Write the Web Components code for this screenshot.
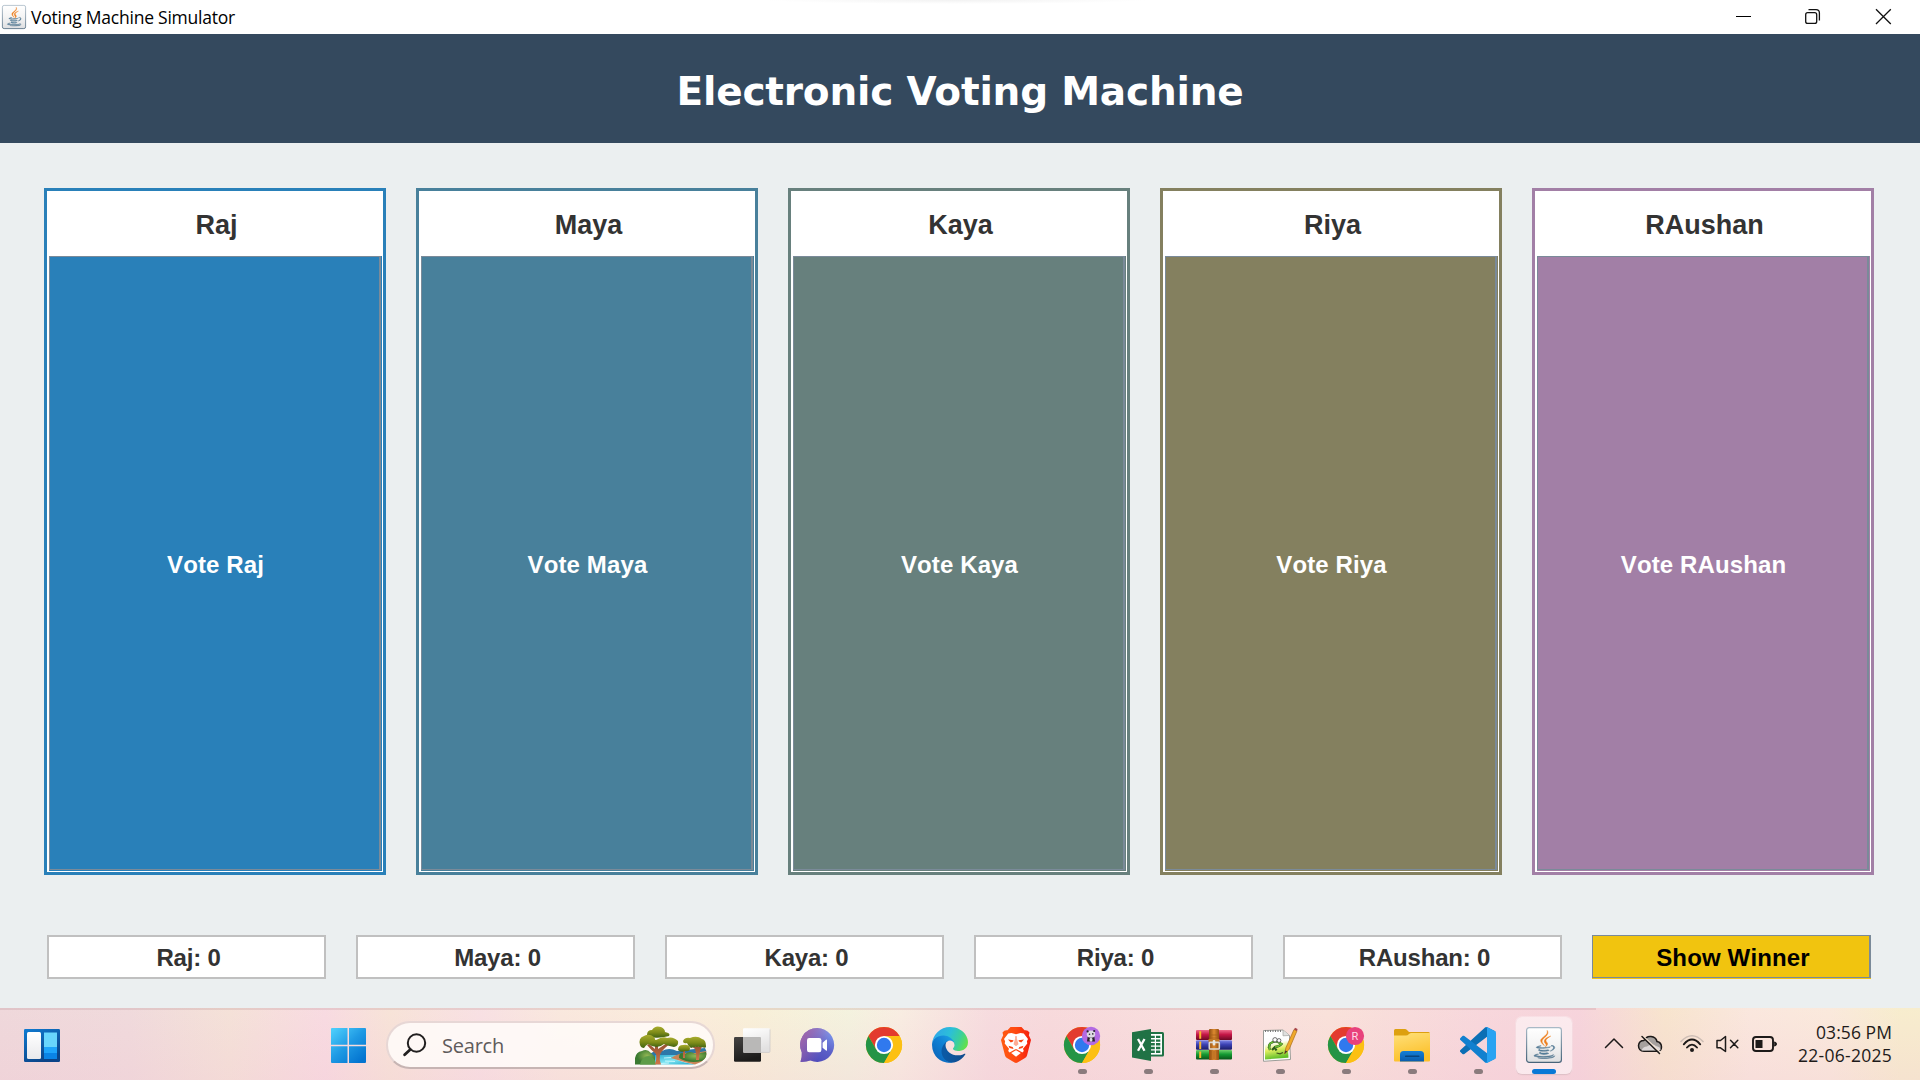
<!DOCTYPE html>
<html lang="en">
<head>
<meta charset="utf-8">
<title>Voting Machine Simulator</title>
<style>
html,body{margin:0;height:100%;overflow:hidden;background:#ebeff0}
body{font-family:"Liberation Sans",Arial,sans-serif}
</style>
</head>
<body>
<voting-desktop></voting-desktop>
<script>
const define = (name, html, after) => customElements.define(name, class extends HTMLElement {
  connectedCallback() {
    if (this.shadowRoot) return;
    const root = this.attachShadow({ mode: 'open' });
    const t = document.createElement('template');
    t.innerHTML = typeof html === 'function' ? html(this) : html;
    root.appendChild(t.content.cloneNode(true));
    if (after) after(this, root);
  }
});

/* One line of text whose tracking is adjusted to a given advance width */
define('fit-text', `<style>:host{display:inline-block;white-space:pre}</style><span><slot></slot></span>`, (el) => {
  const want = +el.getAttribute('w'), has = el.getBoundingClientRect().width;
  if (want && has) el.style.letterSpacing = ((want - has) / el.textContent.length) + 'px';
});

const javaCup = `
<g fill="#5382a1"><path d="M8.851 18.56s-.917.534.653.714c1.902.218 2.874.187 4.969-.211 0 0 .552.346 1.321.646-4.699 2.013-10.633-.118-6.943-1.149M8.276 15.933s-1.028.761.542.924c2.032.209 3.636.227 6.413-.308 0 0 .384.389.987.602-5.679 1.661-12.007.13-7.942-1.218M19.33 20.504s.679.559-.747.991c-2.712.822-11.288 1.069-13.669.033-.856-.373.75-.89 1.254-.998.527-.114.828-.093.828-.093-.953-.671-6.156 1.317-2.643 1.887 9.58 1.553 17.462-.7 14.977-1.82M9.292 13.21s-4.362 1.036-1.544 1.412c1.189.159 3.561.123 5.77-.062 1.806-.152 3.618-.477 3.618-.477s-.637.272-1.098.587c-4.429 1.165-12.986.623-10.522-.568 2.082-1.006 3.776-.892 3.776-.892M17.116 17.584c4.503-2.34 2.421-4.589.968-4.285-.355.074-.515.138-.515.138s.132-.207.385-.297c2.875-1.011 5.086 2.981-.928 4.562 0-.001.07-.062.09-.118M9.734 23.924c4.322.277 10.959-.153 11.116-2.198 0 0-.302.775-3.572 1.391-3.688.694-8.239.613-10.937.168 0-.001.553.457 3.393.639" stroke="#55748c" stroke-width=".45"/></g>
<g fill="#ee7d1a" stroke="#ee7d1a" stroke-width=".4"><path d="M13.116 11.475c1.158 1.333-.304 2.533-.304 2.533s2.939-1.518 1.589-3.418c-1.261-1.772-2.228-2.652 3.007-5.688 0-.001-8.216 2.051-4.292 6.573M14.401 0s2.494 2.494-2.365 6.33c-3.896 3.077-.888 4.832-.001 6.836-2.274-2.053-3.943-3.858-2.824-5.539 1.644-2.469 6.197-3.665 5.19-7.627"/></g>`;
const javaTile = `
<defs><linearGradient id="jb" x1="0" y1="0" x2="0" y2="1"><stop offset="0" stop-color="#fff"/><stop offset=".5" stop-color="#f4f4f4"/><stop offset="1" stop-color="#dedfe1"/></linearGradient>
<linearGradient id="js" x1="0" y1="0" x2="0" y2="1"><stop offset="0" stop-color="#a9b9c6"/><stop offset="1" stop-color="#48647a"/></linearGradient></defs>
<rect x=".6" y=".6" width="34.8" height="34.8" rx="2.6" fill="url(#jb)" stroke="url(#js)" stroke-width="1.2"/>
<g transform="translate(4.3 3.4) scale(1.17)">${javaCup}</g>`;

const chrome = `
<circle cx="18" cy="18" r="18" fill="#fbbc05"/>
<path d="M2.41 9A18 18 0 0 1 33.59 9H18L10.2 22.5Z" fill="#e33b2e"/>
<path d="M2.41 9A18 18 0 0 0 18 36L25.8 22.5L18 18L10.2 22.5Z" fill="#249446"/>
<path d="M33.59 9A18 18 0 0 1 18 36L25.8 22.5A9 9 0 0 0 18 9Z" fill="#fcc013"/>
<circle cx="18" cy="18" r="9.1" fill="#fff"/><circle cx="18" cy="18" r="7.2" fill="#3079ee"/>`;

const icons = {
  taskview: `<defs><linearGradient id="a" x2=".3" y2="1"><stop stop-color="#454443"/><stop offset="1" stop-color="#1c1b1a"/></linearGradient><linearGradient id="b" x2=".3" y2="1"><stop stop-color="#fff"/><stop offset="1" stop-color="#e2e1e1"/></linearGradient></defs>
<rect x="0" y="10" width="27" height="24.7" rx="1.2" fill="url(#a)"/><rect x="9" y="1.3" width="27" height="24.3" rx="1.2" fill="url(#b)"/><path d="M9 10H26Q27 10 27 11V25.6H10.2Q9 25.6 9 24.4Z" fill="#b9b8b7"/><path d="M10 25.4H35Q36 25.4 36 24.4V2.4" fill="none" stroke="#c9c5c5" stroke-width=".7"/>`,
  chat: `<defs><linearGradient id="a" x1=".2" y1="1" x2=".8" y2="0"><stop stop-color="#4b46b8"/><stop offset=".5" stop-color="#5b5fc7"/><stop offset="1" stop-color="#7f9df0"/></linearGradient><linearGradient id="b" x1="0" y1=".2" x2=".7" y2=".6"><stop stop-color="#a566a8"/><stop offset="1" stop-color="#a566a8" stop-opacity="0"/></linearGradient></defs>
<path d="M17.3 1A17 17 0 1 1 10.4 33.6Q6 35.2 .8 35Q.2 34.8.8 33.6Q2 30.5 1.8 25.5A17 17 0 0 1 17.3 1Z" fill="url(#a)"/><path d="M17.3 1A17 17 0 1 1 10.4 33.6Q6 35.2 .8 35Q.2 34.8.8 33.6Q2 30.5 1.8 25.5A17 17 0 0 1 17.3 1Z" fill="url(#b)"/>
<rect x="7" y="11" width="14.4" height="14.2" rx="2.2" fill="#fff"/><path d="M22.6 15.7L26 12.7Q27 12.2 27 13.4V23Q27 24.2 26 23.6L22.6 20.7Z" fill="#fff"/>`,
  chrome,
  edge: `<defs><linearGradient id="a" x1=".2" x2="1"><stop stop-color="#0c59a4"/><stop offset="1" stop-color="#114a8b"/></linearGradient><linearGradient id="b" x1=".9" y1=".2" x2=".2" y2="1"><stop stop-color="#1b9de2"/><stop offset=".4" stop-color="#1080d4"/><stop offset="1" stop-color="#0a63b8"/></linearGradient><linearGradient id="c" x1="0" y1=".3" x2="1" y2=".6"><stop stop-color="#2fa5ea"/><stop offset=".45" stop-color="#2cbfd8"/><stop offset=".75" stop-color="#3bd09a"/><stop offset="1" stop-color="#62e04c"/></linearGradient></defs><g transform="scale(.1406)">
<path fill="url(#a)" d="M231.1 190.5c-3.4 1.8-6.9 3.4-10.5 4.7a101.7 101.7 0 0 1-35.9 6.5c-47.3 0-88.5-32.5-88.5-74.3a31.5 31.5 0 0 1 16.4-27.3c-42.8 1.8-53.8 46.4-53.8 72.5 0 74 68.1 81.4 82.8 81.4 7.9 0 19.8-2.3 27-4.6l1.3-.4a128.3 128.3 0 0 0 66.6-52.8 4 4 0 0 0-5.4-5.7Z"/>
<path fill="url(#b)" d="M105.7 241.4a79.2 79.2 0 0 1-22.7-21.3 80.7 80.7 0 0 1 29.5-120c3.2-1.5 8.5-4.1 15.6-4a32.4 32.4 0 0 1 25.7 13 31.9 31.9 0 0 1 6.3 18.7c0-.2 24.5-79.6-80-79.6-43.9 0-80 41.6-80 78.2a130.2 130.2 0 0 0 12.1 56 128 128 0 0 0 156.4 67 75.5 75.5 0 0 1-62.8-8Z"/>
<path fill="url(#c)" d="M152.3 148.9c-.9 1-3.4 2.5-3.4 5.6 0 2.6 1.7 5.2 4.8 7.3 14.3 10 41.4 8.6 41.5 8.6a59.6 59.6 0 0 0 30.3-8.3 61.4 61.4 0 0 0 30.4-52.9c.3-22.4-8-37.3-11.3-43.9C223.5 23.9 177.7 0 128 0A128 128 0 0 0 0 126.2c.5-36.5 36.8-66 80-66 3.5 0 23.5.3 42 10.1 16.3 8.6 24.9 19 30.8 29.2 6.2 10.7 7.3 24.1 7.3 29.5 0 5.3-2.7 13.3-7.8 19.9Z"/></g>`,
  brave: `<defs><linearGradient id="a"><stop stop-color="#ff5a10"/><stop offset=".5" stop-color="#ff4a12"/><stop offset="1" stop-color="#f51d0c"/></linearGradient></defs>
<path fill="url(#a)" d="M12.5 0H23.5L26.5 3.3Q29.5 2.7 31.5 5.5L30.8 8.2L33 13L29 28.5Q28.5 30 27 31L19.5 35.5Q18 36.3 16.5 35.5L9 31Q7.5 30 7 28.5L3 13L5.2 8.2L4.5 5.5Q6.5 2.7 9.5 3.3Z"/>
<path fill="#fff" d="M18 7.2L22.5 6L25.8 6.6L30 12L28.9 14.3L29.3 16.5L25 21.8L25.8 24L24.4 25.6L18.7 22.2H17.3L11.6 25.6L10.2 24L11 21.8L6.7 16.5L7.1 14.3L6 12L10.2 6.6L13.5 6Z"/>
<path fill="#fff" d="M18 23.2L22.8 26L18 29.8L13.2 26Z"/>
<g fill="#fb4412"><path d="M10 12.5L15.5 13.3L15.1 14.6L12.8 15.4Z"/><path d="M26 12.5L20.5 13.3L20.9 14.6L23.2 15.4Z"/><path d="M17 9.3H19L18.8 11.2L20.5 17.2L18 19.2L15.5 17.2L17.2 11.2Z" opacity=".45"/><path d="M10.5 18.7L14.7 20L15.5 22L11.5 21Z"/><path d="M25.5 18.7L21.3 20L20.5 22L24.5 21Z"/></g>`,
  chromepanda: `${chrome}<circle cx="27" cy="9" r="9.2" fill="#b36ae2"/><path d="M23.7 9.5H30.3L31 14.6H23Z" fill="#2b2430"/><ellipse cx="27" cy="7.2" rx="4.2" ry="3.6" fill="#dddae2"/><g fill="#2c2632"><circle cx="23.6" cy="4.4" r="1.1"/><circle cx="30.2" cy="4" r="1.1"/><circle cx="25.5" cy="7.2" r=".8"/><circle cx="28.8" cy="6.9" r=".8"/></g><ellipse cx="27" cy="12.8" rx="1.5" ry="2" fill="#dddae2"/>`,
  excel: `<rect x="16" y="5" width="18" height="24.6" rx="1.5" fill="#207245"/><rect x="18" y="7" width="14" height="20.6" fill="#fff"/><g fill="#207245"><path d="M20 8.7h4.8v2.4H20zM26 8.7h4.3v2.4H26zM20 12.4h4.8v2.4H20zM26 12.4h4.3v2.4H26zM20 16.1h4.8v2.4H20zM26 16.1h4.3v2.4H26zM20 19.8h4.8v2.4H20zM26 19.8h4.3v2.4H26zM20 23.5h4.8v2.4H20zM26 23.5h4.3v2.4H26z"/><path d="M2 5.2L21 2V34L2 30.4Z"/></g><path d="M8 12L14.5 23.8M14.5 12L8 23.8" stroke="#fff" stroke-width="2.3" fill="none"/>`,
  winrar: `<defs><linearGradient id="r" x2="0" y2="1"><stop stop-color="#ef6a8a"/><stop offset=".45" stop-color="#c41747"/><stop offset="1" stop-color="#6d0825"/></linearGradient><linearGradient id="u" x2="0" y2="1"><stop stop-color="#7f86e8"/><stop offset=".45" stop-color="#3c41b3"/><stop offset="1" stop-color="#1a1c66"/></linearGradient><linearGradient id="g" x2="0" y2="1"><stop stop-color="#6ed06c"/><stop offset=".45" stop-color="#149a33"/><stop offset="1" stop-color="#085518"/></linearGradient><linearGradient id="o"><stop stop-color="#8b4a10"/><stop offset=".5" stop-color="#dd8a30"/><stop offset="1" stop-color="#934e12"/></linearGradient></defs>
<rect y="3" width="36" height="10" rx="1" fill="url(#r)"/><rect y="13.2" width="36" height="9.6" rx="1" fill="url(#u)"/><rect y="23" width="36" height="9.5" rx="1" fill="url(#g)"/><path d="M3.2 4.2h2v7.5h-2zM3.2 14.5h2V22h-2zM3.2 24.5h2V31h-2z" fill="#f7b72c"/><rect x="13" y="2" width="10" height="31" rx="1" fill="url(#o)"/><path d="M14 8h8M14 11h8M15 24v8M18 24v8M21 24v8" stroke="#a45b17" stroke-width=".7"/><path d="M12.500 12h11v3h-11z" fill="#c17622"/><rect x="13.3" y="15.4" width="10" height="6.6" rx=".8" fill="none" stroke="#dcd9d4" stroke-width="1.600"/><rect x="16.700" y="13" width="2.600" height="5.500" rx="1" fill="#e8e6e0"/>`,
  notepad: `<defs><linearGradient id="n" x2=".2" y2="1"><stop offset=".3" stop-color="#fdfdfd"/><stop offset=".6" stop-color="#e1ef60"/><stop offset="1" stop-color="#62bf2a"/></linearGradient></defs>
<path d="M1.5 3.5L21 3L27.5 8.500L28.500 32.500L1.500 34.300Z" fill="#fff" stroke="#9b9d98"/><path d="M3 11L25.500 10.500L26.500 30.700L3 32.500Z" fill="url(#n)"/><path d="M21 3V8.800L27.500 8.500" fill="#dfe0df" stroke="#a2a29f" stroke-width=".7"/><path d="M3 4h17" stroke="#777" stroke-width="2" stroke-dasharray="1 1.500"/><path d="M8 23Q5.500 17 10 15.500Q13 13.500 16 15L19.500 17Q17.500 19.500 13 20L10 23M12 19.500L14.500 23.500M8 18L6.500 21" fill="none" stroke="#2d5a1d" stroke-width="2.300"/><path d="M8 23Q5.500 17 10 15.500Q13 13.500 16 15L19.500 17Q17.500 19.500 13 20" fill="none" stroke="#6cbf31" stroke-width="1.500"/><circle cx="13" cy="12.800" r="2.200" fill="#fff" stroke="#333" stroke-width=".7"/><circle cx="17" cy="13.500" r="1.900" fill="#fff" stroke="#333" stroke-width=".7"/><path d="M14.500 26L18 26.800L21 25.500" stroke="#40541c" stroke-width="1.100" fill="none"/>
<path d="M22.500 27L24 20.500L32 2.500L35 3.800L27 22.500Z" fill="#f0a92b" stroke="#a96b18" stroke-width=".7"/><path d="M32 2.500L33 .8L35.600 1.900L35 3.900Z" fill="#a7444a"/><path d="M22.500 27L23.400 23.500L25.300 24.300Z" fill="#333"/>`,
  chromer: `${chrome}<circle cx="27" cy="9" r="9.1" fill="#e8417c"/><text x="27" y="13.2" text-anchor="middle" font-family="Roboto,sans-serif" font-size="11" fill="#ffdce8">R</text>`,
  folder: `<defs><linearGradient id="f" x2=".3" y2="1"><stop stop-color="#ffe07a"/><stop offset="1" stop-color="#fcc02a"/></linearGradient><linearGradient id="e" x2="0" y2="1"><stop stop-color="#137fd8"/><stop offset="1" stop-color="#0a5cab"/></linearGradient></defs>
<path d="M0 3.5Q0 2 1.500 2H11Q12 2 13 3L15 5H34.500Q36 5 36 6.500V20H0Z" fill="#dda00f"/><path d="M0 8.500H12Q13.500 8.500 15 7Q16 6 17.500 6H36V33.500Q36 34.500 35 34.500H1Q0 34.500 0 33.500Z" fill="url(#f)"/><path d="M6 34.500V27.500Q6 24 9.500 24H26.500Q30 24 30 27.500V34.500Z" fill="url(#e)"/><rect x="11" y="28.600" width="14.500" height="1.500" rx=".7" fill="#07457f"/>`,
  vscode: `<g transform="scale(.36)"><path fill="#0b6fb5" d="M96.461 10.796L75.857.876C73.472-.273 70.622.212 68.750 2.083L1.299 63.583c-1.815 1.654-1.813 4.511.004 6.162l5.510 5.009c1.485 1.350 3.722 1.450 5.321.237L93.361 13.370C96.086 11.303 100 13.246 100 16.667v-.24c0-2.401-1.375-4.590-3.539-5.631Z"/><path fill="#1180cf" d="M96.461 89.204L75.857 99.125c-2.385 1.148-5.235.663-7.107-1.208L1.299 36.417c-1.815-1.654-1.813-4.511.004-6.162l5.510-5.009c1.485-1.350 3.722-1.450 5.321-.237L93.361 86.630C96.086 88.697 100 86.754 100 83.333v.24c0 2.401-1.375 4.590-3.539 5.631Z"/><path fill="#29a3f2" d="M75.858 99.126c-2.386 1.148-5.236.662-7.108-1.209C71.056 100.223 75 98.590 75 95.328V4.672C75 1.410 71.056-.223 68.750 2.083 70.622.211 73.472-.274 75.858.874l20.601 9.907C98.623 11.822 100 14.011 100 16.413v67.174c0 2.402-1.377 4.592-3.541 5.633L75.858 99.126Z"/></g>`,
  java: javaTile
};

define('app-icon', el => `<style>:host{display:block;width:36px;height:36px}svg{display:block;width:100%;height:100%;overflow:visible}</style><svg viewBox="0 0 36 36">${icons[el.getAttribute('name')]}</svg>`);

define('task-item', el => `<style>
:host{display:flex;width:66px;height:72px;justify-content:center;align-items:flex-start;flex:none}
.cell{box-sizing:border-box;width:56px;height:57px;margin-top:9px;padding-top:10px;border-radius:6px;display:flex;flex-direction:column;align-items:center}
.mark{width:9px;height:5px;border-radius:2.5px;background:#8a7b7d;margin-top:6px;visibility:hidden;flex:none}
:host([open]) .mark{visibility:visible}
:host([active]) .cell{background:rgba(255,255,255,.5);box-shadow:0 1px 1px rgba(120,70,80,.2),0 0 0 1px rgba(255,255,255,.25)}
:host([active]) .mark{visibility:visible;width:24px;background:#0a78d6}
</style><div class="cell"><app-icon name="${el.getAttribute('name')}"></app-icon><div class="mark"></div></div>`);

define('title-bar', `<style>
:host{display:flex;height:34px;flex:none;align-items:center;background:radial-gradient(ellipse 190px 4px at 957px 0,#f2f2f2,#fff) #fff;color:#000;padding-left:2px}
.ico{width:24px;height:24px;margin-right:5px;margin-top:-1px}
fit-text{font:17.5px "Open Sans","Noto Sans",sans-serif;line-height:34px;margin-top:-1px;flex:none}
.name{flex:1;display:flex}
.controls{display:flex}
svg{display:block}
</style><app-icon class="ico" name="java"></app-icon><div class="name"><fit-text w="204">Voting Machine Simulator</fit-text></div>
<div class="controls"><svg width="204" height="34" viewBox="1716 0 204 34" fill="none" stroke="#111" stroke-width="1.3"><path d="M1736 16.5H1751" stroke="#000" stroke-width="1"/><rect x="1805.700" y="12.700" width="11" height="10.700" rx="2"/><path d="M1808.500 9.600H1816Q1819.400 9.600 1819.400 13V20.500"/><path d="M1876 9.300L1890.800 24M1890.800 9.300L1876 24"/></svg></div>`);

define('app-header', `<style>:host{display:flex;height:109px;flex:none;background:#34495e;color:#fff;align-items:center;justify-content:center;padding-top:5px;box-sizing:border-box}
fit-text{font:bold 39px "DejaVu Sans",Verdana,sans-serif}</style><fit-text><slot></slot></fit-text>`, (el, root) => {
  const f = root.querySelector('fit-text'), n = el.textContent.length;
  f.style.letterSpacing = ((567 - f.getBoundingClientRect().width) / n) + 'px';
});

define('candidate-card', el => {
  const n = el.getAttribute('name');
  return `<style>
:host{box-sizing:border-box;display:flex;flex-direction:column;width:342px;height:687px;border:3px solid var(--c);background:#fff;padding:0 1px 1px 2px}
.name{height:65px;flex:none;display:flex;align-items:center;justify-content:center;font-weight:bold;font-size:27px;color:#333;padding:4px 0 0 2px;box-sizing:border-box}
.edge{flex:1;display:flex;background:var(--c);padding:0 1px 1px 0}
button{all:unset;box-sizing:border-box;flex:1;border:solid #7a8a99;border-width:1px 2px 1px 1px;background:var(--c);color:#fff;font-weight:bold;font-size:24px;font-kerning:none;letter-spacing:.12px;text-align:center;padding:3px 0 0 2px}
</style><div class="name">${n}</div><div class="edge"><button>Vote ${n}</button></div>`;
});

define('score-box', `<style>:host{box-sizing:border-box;display:flex;width:279px;height:44px;border:2px solid #c0c0c0;background:#fff;align-items:center;justify-content:center;font-weight:bold;font-size:24px;letter-spacing:-.2px;color:#333;padding:1px 0 0 4px}</style><slot></slot>`);

define('winner-button', `<style>:host{box-sizing:border-box;display:flex;width:279px;height:44px;background:#f1c40f;padding-bottom:1px}
button{all:unset;box-sizing:border-box;flex:1;border:solid #7a8a99;border-width:1px 2px 1px 1px;color:#000;text-align:center;font-weight:bold;font-size:24px;font-kerning:none;letter-spacing:.15px;padding:2px 0 0 4px}</style><button><slot></slot></button>`);

define('search-pill', `<style>
:host{box-sizing:border-box;display:flex;align-items:center;width:329px;height:48px;border-radius:24px;background:rgba(255,251,249,.86);border:2px solid rgba(200,170,170,.42);border-bottom-color:rgba(165,140,140,.62);flex:none;padding-left:15px}
fit-text{font:20px "Open Sans","Noto Sans",sans-serif;color:#5f5b5b;margin-left:15px;margin-right:131px}
svg{display:block;flex:none;overflow:visible}
</style>
<svg width="24" height="24" viewBox="0 0 24 24" fill="none" stroke="#211f1f"><circle cx="13.5" cy="10" r="8.7" stroke-width="2"/><path d="M7.3 16.4L1.6 21.8" stroke-width="2.8" stroke-linecap="round"/></svg>
<fit-text w="62">Search</fit-text>
<svg width="72" height="39" viewBox="0 0 72 39">
<defs><linearGradient id="t" x2="0" y2="1"><stop stop-color="#a9ad2e"/><stop offset=".55" stop-color="#7c8a18"/><stop offset="1" stop-color="#3f6212"/></linearGradient><linearGradient id="w" x2="1" y2="1"><stop stop-color="#2aa7cf"/><stop offset=".5" stop-color="#7fe4f2"/><stop offset="1" stop-color="#1aa4c8"/></linearGradient><linearGradient id="k" x2="0" y2="1"><stop stop-color="#8a4a2e"/><stop offset="1" stop-color="#d27649"/></linearGradient><radialGradient id="h" cx=".6" cy=".4"><stop stop-color="#93b855"/><stop offset="1" stop-color="#3b7a31"/></radialGradient></defs>
<path d="M14 29Q20 23 27 25Q34 21 42 25L50 24L70 22Q74 28 66 31H14Z" fill="#2c77a8"/>
<path d="M20 29H42Q34 34 60 38.5H20Z" fill="url(#w)"/><path d="M29 32L36 31.5M30 35L40 35.5M26 37.5L34 37" stroke="#d6fbff" stroke-width=".8"/>
<path d="M36 32Q44 26 60 27L71 25Q73 31 66 36L60 38.5Q48 36 36 32Z" fill="#c88557"/><path d="M44 32Q44 25 50 28Q55 24 60 28L71 26Q73 31 67 35Q54 38 44 32Z" fill="url(#h)"/>
<path d="M0 38.5V32Q1 26 7 25Q12 22 16 27L20 31V38.5Z" fill="url(#h)"/><path d="M5 38.5Q7 30 14 30Q20 31 21 38.5Z" fill="#5e9c48"/>
<path d="M20 38.5Q22 32 21 28Q16 24 12 19L14 18L20 23V14H23V23L32 17L34 18.5Q26 25 25 29Q24 34 26 38.5Z" fill="url(#k)"/><path d="M61 34Q62 28 60 23L55 19L57 18L61 21V17H63V21L67 18L68 19.5Q64 24 64 34ZM48 32V24H50V32Z" fill="url(#k)"/>
<g fill="url(#t)"><path d="M12 9Q12 4 17 4Q20-1 26 1Q30 3 30 6Q36 7 34 10Q24 13 14 11Z"/><path d="M5 19Q3 12 9 10Q14 7 19 11Q22 15 18 17Q12 17 9 22Q6 22 5 19Z"/><path d="M13 18Q14 13 21 14Q28 10 32 12Q38 10 43 15Q44 20 39 21Q33 20 29 18Q22 24 13 18Z"/><path d="M48 15Q50 11 55 12Q62 9 67 13Q71 14 71 20Q72 23 66 21Q60 20 56 22Q53 20 52 17Q48 18 48 15Z"/><path d="M43 24Q43 19 48 19Q54 18 55 22Q55 26 50 25Q46 27 43 24Z"/></g>
</svg>`);

define('task-bar', `<style>
:host{display:flex;height:72px;flex:none;position:relative;align-items:stretch;
background:linear-gradient(180deg,rgba(255,255,255,.05),rgba(243,205,216,.3)) ,linear-gradient(90deg,#eed6d9 0,#efd8da 130px,#f4e0d6 230px,#f8d9e0 325px,#f7e2d6 390px,#f8dfe2 480px,#f9e7dc 560px,#faecd9 690px,#f8efd6 750px,#f3f2dd 850px,#f8ece0 900px,#f6dadd 990px,#f7d8da 1050px,#f8dddc 1200px,#f9e0d8 1330px,#f7d5da 1480px,#f6d2da 1580px,#f7e3cb 1665px,#fae6dc 1750px,#fae8da 1830px,#f7eccb 1900px)}
.line{position:absolute;left:0;top:0;width:1596px;height:2px;background:rgba(170,120,125,.2)}
.left{width:331px;flex:none;box-sizing:border-box;padding:21px 0 0 24px}
.start{width:55px;flex:none;padding-top:20px;box-sizing:border-box}
svg{display:block;flex:none}
search-pill{margin-top:13px}
.apps{display:flex;margin-left:4px}
.tray{display:flex;flex:1;margin-left:23px}
.clock{display:flex;flex-direction:column;align-items:flex-end;flex:1;padding:13px 28px 0 0;font:17.5px/23px "Open Sans","Noto Sans",sans-serif;color:#1e1b1a}
.clock fit-text{height:23px}
</style>
<div class="line"></div>
<div class="left"><svg width="36" height="33" viewBox="0 0 36 33"><defs><linearGradient id="a" x2=".5" y2="1"><stop stop-color="#0f7bd2"/><stop offset="1" stop-color="#0b4488"/></linearGradient><linearGradient id="b" x2="0" y2="1"><stop stop-color="#fff"/><stop offset="1" stop-color="#e9e9ec"/></linearGradient></defs><rect width="36" height="33" rx="1.3" fill="url(#a)"/><rect x="3" y="3" width="14" height="27" rx="1.5" fill="url(#b)"/><path d="M20 3.5h13V18H20z" fill="#68d6fd"/><path d="M20 18h13v6H20z" fill="#1ea5fb"/><path d="M20 24h13v6H20z" fill="#0a84e6"/></svg></div>
<div class="start"><svg width="35" height="35" viewBox="0 0 35 35"><defs><linearGradient id="s" gradientUnits="userSpaceOnUse" x1="2" y1="2" x2="30" y2="33"><stop stop-color="#4bccfb"/><stop offset=".5" stop-color="#1f9ae4"/><stop offset="1" stop-color="#0374d0"/></linearGradient></defs><path fill="url(#s)" d="M1 0H16.5V16.8H0V1Q0 0 1 0ZM18 0H34Q35 0 35 1V16.8H18ZM0 18.3H16.5V35H1Q0 35 0 34ZM18 18.3H35V34Q35 35 34 35H18Z"/></svg></div>
<search-pill></search-pill>
<div class="apps"><task-item name="taskview"></task-item><task-item name="chat"></task-item><task-item name="chrome"></task-item><task-item name="edge"></task-item><task-item name="brave"></task-item><task-item name="chromepanda" open></task-item><task-item name="excel" open></task-item><task-item name="winrar" open></task-item><task-item name="notepad" open></task-item><task-item name="chromer" open></task-item><task-item name="folder" open></task-item><task-item name="vscode" open></task-item><task-item name="java" active></task-item></div>
<div class="tray"><svg width="180" height="72" viewBox="1600 1008 180 72" fill="none" stroke="#1d1a19" stroke-width="1.5" stroke-linecap="round" stroke-linejoin="round">
<path d="M1605.5 1047.5L1614 1039L1622.500 1047.500"/>
<path d="M1644 1051.300Q1638.500 1051 1638.500 1045.500Q1639 1040.500 1644 1040.500Q1646 1036 1651 1036.500Q1656 1037 1657 1041.500Q1661.500 1042.500 1661.500 1047Q1661.500 1051.300 1657 1051.300Z" fill="#a6a19e"/><path d="M1641.500 1050.500Q1643 1046.500 1647 1046.500Q1652 1043 1656 1046Q1661 1047 1660.500 1050.300Z" fill="#ddd8d8" stroke="none"/><path d="M1643.500 1036.500L1660.500 1052.500" stroke="#f7e5d5" stroke-width="1.500"/><path d="M1642 1036.500L1659.500 1053.500"/>
<path d="M1681 1041.500Q1692 1030 1703 1041.500" stroke="#cdbdb5" stroke-width="1.700"/><path d="M1683.800 1044.300Q1692 1034.800 1700.200 1044.300" stroke-width="1.900"/><path d="M1687 1047.500Q1692 1041.700 1697 1047.500" stroke-width="1.900"/><circle cx="1692" cy="1050" r="2" fill="#1d1a19" stroke="none"/>
<path d="M1717 1040.500H1720.500L1725.500 1036.500V1051.500L1720.500 1047.800H1717Z"/><path d="M1730.500 1040.300L1737.800 1047.700M1737.800 1040.300L1730.500 1047.700"/>
<rect x="1753" y="1037" width="20" height="14" rx="3" stroke-width="1.900"/><rect x="1755.500" y="1040" width="7" height="8" fill="#1d1a19" stroke="none"/><path d="M1774.500 1042Q1776.500 1042 1776.500 1044Q1776.500 1046 1774.500 1046Z" fill="#1d1a19" stroke-width="1"/>
</svg><div class="clock"><fit-text w="76">03:56 PM</fit-text><fit-text w="94">22-06-2025</fit-text></div></div>`);

define('voting-desktop', `<style>
:host{display:flex;flex-direction:column;width:1920px;height:1080px;background:#ebeff0;overflow:hidden}
.cards{display:flex;gap:30px;padding:45px 46px 0 44px}
.scores{display:flex;gap:30px;padding:60px 49px 0 47px;flex:1}
</style>
<title-bar></title-bar>
<app-header>Electronic Voting Machine</app-header>
<div class="cards">
<candidate-card name="Raj" style="--c:#2980b9"></candidate-card>
<candidate-card name="Maya" style="--c:#48809b"></candidate-card>
<candidate-card name="Kaya" style="--c:#67807d"></candidate-card>
<candidate-card name="Riya" style="--c:#84805f"></candidate-card>
<candidate-card name="RAushan" style="--c:#a27fa6"></candidate-card>
</div>
<div class="scores"><score-box>Raj: 0</score-box><score-box>Maya: 0</score-box><score-box>Kaya: 0</score-box><score-box>Riya: 0</score-box><score-box>RAushan: 0</score-box><winner-button>Show Winner</winner-button></div>
<task-bar></task-bar>`);
</script>
</body>
</html>
